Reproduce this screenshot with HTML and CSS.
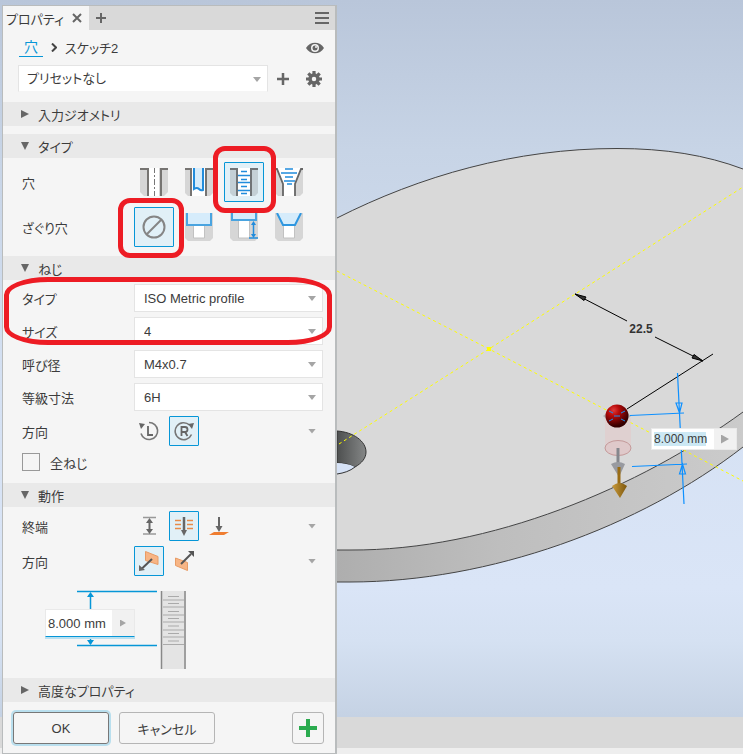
FILE: index.html
```html
<!DOCTYPE html>
<html lang="ja">
<head>
<meta charset="utf-8">
<meta name="viewport" content="width=device-width, initial-scale=1">
<title>プロパティ</title>
<link rel="stylesheet" href="styles.css">
</head>
<body>
<div class="app">
  <aside class="panel">
    <header class="tabs">
      <div class="tab">プロパティ
        <button class="icon-btn" type="button" aria-label="閉じる"><svg width="10" height="10" viewBox="0 0 10 10"><path d="M1 1l8 8M9 1l-8 8" stroke="#666" stroke-width="2"/></svg></button>
      </div>
      <button class="icon-btn tab-add" type="button" aria-label="タブを追加"><svg width="10" height="10" viewBox="0 0 10 10"><path d="M5 0v10M0 5h10" stroke="#666" stroke-width="2"/></svg></button>
      <button class="icon-btn menu" type="button" aria-label="メニュー"><svg width="14" height="12" viewBox="0 0 14 12"><path d="M0 1h14M0 6h14M0 11h14" stroke="#666" stroke-width="2"/></svg></button>
    </header>

    <nav class="crumbs">
      <a class="crumb-link" href="#hole">穴</a>
      <svg width="6" height="9" viewBox="0 0 6 9"><path d="M1 0.500l4 4-4 4" fill="none" stroke="#444" stroke-width="2"/></svg>
      <span>スケッチ2</span>
      <button class="icon-btn push" type="button" aria-label="表示"><svg width="18" height="12" viewBox="0 0 18 12"><path d="M0 6C4-1 14-1 18 6 14 13 4 13 0 6z" fill="#666"/><circle cx="9" cy="6" r="4" fill="#f5f5f5"/><circle cx="9" cy="6" r="2.500" fill="#666"/><circle cx="10" cy="5" r="1" fill="#f5f5f5"/></svg></button>
    </nav>

    <div class="preset">
      <span class="drop preset-drop"><select aria-label="プリセット"><option>プリセットなし</option></select></span>
      <button class="icon-btn" type="button" aria-label="プリセットを追加"><svg width="14" height="14" viewBox="0 0 14 14"><path d="M7 1v12M1 7h12" stroke="#666" stroke-width="2.500"/></svg></button>
      <button class="icon-btn" type="button" aria-label="設定"><svg width="16" height="16" viewBox="0 0 16 16"><g fill="none" stroke="#666"><circle cx="8" cy="8" r="4" stroke-width="3.500"/><path d="M8 0v3M8 13v3M0 8h3M13 8h3M2.300 2.300l2.200 2.200M11.500 11.500l2.200 2.200M2.300 13.700l2.200-2.200M11.500 4.500l2.200-2.200" stroke-width="3.200"/></g></svg></button>
    </div>

    <button class="section-head" type="button"><span class="tri tri-right"></span>入力ジオメトリ</button>

    <section class="section">
      <button class="section-head open" type="button"><span class="tri tri-down"></span>タイプ</button>
      <div class="section-body type-body">
        <div class="row">
          <span class="label">穴</span>
          <div class="tools large">
            <button class="tool" type="button" aria-label="単純穴"><svg width="28" height="28" viewBox="0 0 28 28"><path d="M0 0h9v28H4l-4-4zM19 0h9v24l-4 4h-5z" fill="#d6d6d6"/><path d="M9 0h10v28H9z" fill="#fff"/><path d="M0 1h8v27M28 1h-7v27" fill="none" stroke="#767472" stroke-width="2"/><path d="M14.500-1v30" stroke="#777" stroke-dasharray="6 2 2 2"/></svg></button>
            <button class="tool" type="button" aria-label="クリアランス穴"><svg width="28" height="28" viewBox="0 0 28 28"><path d="M0 0h6v28H3l-3-3zM20 0h8v25l-3 3h-5z" fill="#d6d6d6"/><path d="M6 0h14v28H6z" fill="#fff"/><path d="M0 1h6v27M28 1h-7v27" fill="none" stroke="#767472" stroke-width="2"/><path d="M9 0v21q3-2 5 0t4 1V0" fill="#d6ecfb" stroke="#218cdc" stroke-width="2"/></svg></button>
            <button class="tool selected ring-hole" type="button" aria-label="ねじ穴" aria-pressed="true"><svg width="28" height="28" viewBox="0 0 28 28"><path d="M0 0h7v28H3l-3-3zM21 0h7v25l-3 3h-4z" fill="#c4d0d6"/><path d="M7 0h14v28H7z" fill="#fff"/><path d="M0 1h7v27M28 1h-7v27" fill="none" stroke="#707477" stroke-width="2"/><path d="M11 3.500h6M8 7.500h12M11 11.500h6M8 14.500h12M11 18.500h6M8 22.500h12M11 25.500h6" stroke="#218cdc" stroke-width="1.300"/></svg></button>
            <button class="tool" type="button" aria-label="テーパねじ穴"><svg width="28" height="28" viewBox="0 0 28 28"><path d="M0 0h28v25l-3 3H3l-3-3z" fill="#d6d6d6"/><path d="M2 0h24l-6 16v12H8V16z" fill="#fff"/><path d="M0 1h2l6 15v12M28 1h-2l-6 15v12" fill="none" stroke="#666" stroke-width="1.800"/><path d="M10 1h8M6 5h16M10 9h8M9 13h11M12 16h5" stroke="#218cdc" stroke-width="1.400"/></svg></button>
          </div>
        </div>
        <div class="row">
          <span class="label">ざぐり穴</span>
          <div class="tools large">
            <button class="tool selected ring-seat" type="button" aria-label="なし" aria-pressed="true"><svg width="24" height="24" viewBox="0 0 24 24"><circle cx="12" cy="12" r="10.500" fill="none" stroke="#858585" stroke-width="2"/><path d="M5 19L19 5" stroke="#858585" stroke-width="2"/></svg></button>
            <button class="tool" type="button" aria-label="ざぐり"><svg width="28" height="28" viewBox="0 0 28 28"><path d="M0 0h28v25l-3 3H3l-3-3z" fill="#d6d6d6"/><path d="M8.500 12h11v13h-11z" fill="#fff" stroke="#c2c2c2"/><path d="M2 0v12h24V0" fill="#d6ecfb" stroke="#4aa4e0" stroke-width="2"/></svg></button>
            <button class="tool" type="button" aria-label="スポットフェイス"><svg width="28" height="28" viewBox="0 0 28 28"><path d="M0 0h28v25l-3 3H3l-3-3z" fill="#d6d6d6"/><path d="M8.500 7h11v18h-11z" fill="#fff" stroke="#c2c2c2"/><path d="M2 0v7h24V0" fill="#d6ecfb" stroke="#4aa4e0" stroke-width="2"/><path d="M23.500 11v12M19 25h9" stroke="#218cdc" stroke-width="1.500"/><path d="M23.500 8l2.500 4h-5zM23.500 25l2.500-4h-5z" fill="#218cdc"/></svg></button>
            <button class="tool" type="button" aria-label="皿穴"><svg width="28" height="28" viewBox="0 0 28 28"><path d="M0 0h28v25l-3 3H3l-3-3z" fill="#d6d6d6"/><path d="M8.500 12h11v13h-11z" fill="#fff" stroke="#c2c2c2"/><path d="M2 0l6 12h12l6-12" fill="#d6ecfb" stroke="#2f97e0" stroke-width="2"/></svg></button>
          </div>
        </div>
      </div>
    </section>

    <section class="section">
      <button class="section-head open" type="button"><span class="tri tri-down"></span>ねじ</button>
      <div class="section-body thread-body">
        <div class="ring-rows">
          <div class="row"><label class="label" for="t-type">タイプ</label><span class="drop"><select id="t-type"><option>ISO Metric profile</option></select></span></div>
          <div class="row"><label class="label" for="t-size">サイズ</label><span class="drop"><select id="t-size"><option>4</option></select></span></div>
        </div>
        <div class="row"><label class="label" for="t-name">呼び径</label><span class="drop"><select id="t-name"><option>M4x0.7</option></select></span></div>
        <div class="row"><label class="label" for="t-class">等級寸法</label><span class="drop"><select id="t-class"><option>6H</option></select></span></div>
        <div class="row">
          <span class="label">方向</span>
          <div class="tools">
            <button class="tool" type="button" aria-label="左"><svg width="20" height="20" viewBox="0 0 20 20"><path d="M10 1.500a8.500 8.500 0 1 1-8 11" fill="none" stroke="#777" stroke-width="1.600"/><path d="M0 2l6 1-4 5z" fill="#666"/><path d="M9 5v9h5" fill="none" stroke="#666" stroke-width="1.800"/></svg></button>
            <button class="tool selected" type="button" aria-label="右" aria-pressed="true"><svg width="20" height="20" viewBox="0 0 20 20"><path d="M17.500 13.500a8.500 8.500 0 1 1-2-9.500" fill="none" stroke="#777" stroke-width="1.600"/><path d="M20 2l-6 1 4 5z" fill="#666"/><path d="M7.500 15V6h3.500a2.500 2.500 0 0 1 0 5H8M11 11l2.500 4" fill="none" stroke="#666" stroke-width="1.800"/></svg></button>
            <button class="more" type="button" aria-label="その他"></button>
          </div>
        </div>
        <label class="check"><input type="checkbox">全ねじ</label>
      </div>
    </section>

    <section class="section">
      <button class="section-head open" type="button"><span class="tri tri-down"></span>動作</button>
      <div class="section-body action-body">
        <div class="row">
          <span class="label">終端</span>
          <div class="tools">
            <button class="tool" type="button" aria-label="距離"><svg width="20" height="20" viewBox="0 0 20 20"><path d="M4 1.500h13M4 18h13" stroke="#999" stroke-width="1.500"/><path d="M10.500 5v10" stroke="#666" stroke-width="2"/><path d="M10.500 2l3.500 5H7zM10.500 18l3.500-5H7z" fill="#666"/></svg></button>
            <button class="tool selected" type="button" aria-label="全貫通" aria-pressed="true"><svg width="20" height="20" viewBox="0 0 20 20"><path d="M1 4.500h6M13 4.500h6M1 8.500h6M13 8.500h6M1 12.500h6M13 12.500h6" stroke="#e88a48" stroke-width="1.600"/><path d="M10 1v14" stroke="#666" stroke-width="2.500"/><path d="M10 20l3-6H7z" fill="#666"/></svg></button>
            <button class="tool" type="button" aria-label="指定面"><svg width="20" height="20" viewBox="0 0 20 20"><path d="M5 16h15l-5 3H0z" fill="#ef7d30"/><path d="M10 1v10" stroke="#666" stroke-width="2"/><path d="M10 16l3.500-6h-7z" fill="#666"/></svg></button>
            <button class="more" type="button" aria-label="その他"></button>
          </div>
        </div>
        <div class="row">
          <span class="label">方向</span>
          <div class="tools">
            <button class="tool selected" type="button" aria-label="既定" aria-pressed="true"><svg width="20" height="20" viewBox="0 0 20 20"><path d="M6.500 0.500l12.500 5v8l-12.500-4z" fill="#f7b585" stroke="#e89c66"/><path d="M13 8L3 17.500" stroke="#555" stroke-width="2"/><path d="M0 20v-6l6 5z" fill="#666"/></svg></button>
            <button class="tool" type="button" aria-label="反転"><svg width="20" height="20" viewBox="0 0 20 20"><path d="M1.500 7l12 4.500v8l-12-5z" fill="#f7b585" stroke="#e89c66"/><path d="M7 13L17 3" stroke="#555" stroke-width="2"/><path d="M20 0v6l-6-6z" fill="#555"/></svg></button>
            <button class="more" type="button" aria-label="その他"></button>
          </div>
        </div>
        <div class="depth">
          <svg width="142" height="80" viewBox="0 0 142 80">
            <path d="M116 1h25v78h-25z" fill="#e4e4e4"/><path d="M116.500 1v78M140 1v78" stroke="#888" stroke-width="1.500"/>
            <path d="M118 10h21M118 17h21M118 25h21M118 32h21M118 40h21M118 47h21M118 54.500h21" stroke="#aaa"/><path d="M123 6.500h11M123 13.500h11M123 21.500h11M123 28.500h11M123 36h11M123 43.500h11M123 51h11" stroke="#aaa"/>
            <path d="M32 1.500h80M32 55.500h80" stroke="#0696d7" stroke-width="1.500"/><path d="M45.500 4v50" stroke="#0696d7" stroke-width="1.500"/><path d="M45.500 2l3.500 5h-7zM45.500 55l3.500-5h-7z" fill="#0696d7"/>
          </svg>
          <span class="value depth-value"><input type="text" value="8.000 mm" aria-label="深さ"><button type="button" aria-label="深さのオプション"></button></span>
        </div>
      </div>
    </section>

    <button class="section-head" type="button"><span class="tri tri-right"></span>高度なプロパティ</button>

    <footer class="actions">
      <button class="btn primary" type="button">OK</button>
      <button class="btn" type="button">キャンセル</button>
      <button class="btn square" type="button" aria-label="適用"><svg width="20" height="20" viewBox="0 0 20 20"><path d="M10 1v18M1 10h18" stroke="#2bab4f" stroke-width="4"/></svg></button>
    </footer>
  </aside>

  <main class="viewport">
    <svg class="scene" viewBox="337 0 406 717" preserveAspectRatio="xMinYMin slice">
      <defs>
        <linearGradient id="side" x1="0" x2="1"><stop offset="0" stop-color="#aeaeae"/><stop offset="0.400" stop-color="#bebebe"/><stop offset="1" stop-color="#cbcbcb"/></linearGradient>
        <linearGradient id="bore" x1="0" x2="1"><stop offset="0" stop-color="#4d4f4f"/><stop offset="1" stop-color="#858787"/></linearGradient>
        <radialGradient id="ball" cx="0.350" cy="0.250" r="0.700"><stop offset="0" stop-color="#df3b3b"/><stop offset="0.350" stop-color="#b80a0a"/><stop offset="1" stop-color="#350000"/></radialGradient>
        <linearGradient id="gold" x1="0" x2="1"><stop offset="0" stop-color="#c99a3c"/><stop offset="1" stop-color="#7d570c"/></linearGradient>
      </defs>
      <path d="M743 412C640 487 490 551 350 550L337 550V582H350C490 582 640 527 743 447z" fill="url(#side)"/>
      <path d="M337 218C420 176 515 148.500 617 148.500C665 148.500 706 155 743 169V412C640 487 490 551 350 550H337z" fill="#d9d9d9"/>
      <g fill="none" stroke="#444"><path d="M337 218C420 176 515 148.500 617 148.500C665 148.500 706 155 743 169"/><path d="M743 412C640 487 490 551 350 550H337"/><path d="M743 447C640 527 490 582 350 582H337"/></g>
      <path d="M337 431C353 432 366 441 366 452C366 458 362 463 355 467C349 464 343 463 337 463z" fill="url(#bore)" stroke="#333"/>
      <path d="M337 463C343 463 349 464 355 467C350 471 344 473 337 474z" fill="#d6e2f6"/><path d="M355 467C350 471 344 473 337 474" fill="none" stroke="#333"/>
      <g stroke="#ff0" stroke-dasharray="3 3" fill="none"><path d="M339 444L489 349L743 187M337 271L489 349L743 481"/></g>
      <path d="M487 347h4v4h-4z" fill="#ff0"/>
      <g stroke="#000" fill="none"><path d="M575 294L627 321M655 337L703 361M627 409L713 354"/></g>
      <path d="M575 294l11 3-2 3.500zM703 361l-11-3 2-3.500z" fill="#333" stroke="#000"/>
      <text class="dim" x="641" y="333" text-anchor="middle">22.5</text>
      <path d="M605 418h26v30c0 10-26 10-26 0z" fill="#e4c8c8" opacity="0.550"/><ellipse cx="618" cy="448" rx="13" ry="7.500" fill="#dfc9ca" stroke="#c49a9a"/>
      <path d="M618 448v21" stroke="#85878d" stroke-width="3"/><path d="M611 464q7-4 14 0l-6 13z" fill="#989aa0"/>
      <path d="M619 467v20" stroke="#9a6c14" stroke-width="3"/><path d="M612 486q8-6 15 0l-7 12z" fill="url(#gold)"/>
      <path d="M603 416l14-10 14 10-14 11z" fill="#888" opacity="0.500"/><circle cx="617" cy="416" r="11.500" fill="url(#ball)"/>
      <path d="M609 411l4 2M621 413l4-2M609 421l4-2M621 419l4 2M614 416h6" stroke="#1a90f0"/>
      <g stroke="#0d90ff" fill="none" stroke-width="1.200"><path d="M630 415.500L684 413M632 466.500L687 464M677.500 373L684 504M676 403h6l-2.500 10zM679.500 474h6l-3-10z"/></g>
    </svg>
    <span class="value pin"><input type="text" value="8.000 mm" aria-label="穴の深さ"><button type="button" aria-label="穴の深さのオプション"></button></span>
  </main>
  <div class="status"></div>
</div>
</body>
</html>
```

FILE: styles.css
```css
* {
  box-sizing: border-box;
}

body {
  margin: 0;
  color: #3c3c3c;
  font-family: "Liberation Sans", "Noto Sans CJK JP", sans-serif;
  font-size: 13px;
  font-feature-settings: "palt";
}

button,
input,
select {
  margin: 0;
  padding: 0;
  border: 0;
  color: inherit;
  font: inherit;
  font-feature-settings: inherit;
}

button {
  background: none;
}

svg {
  display: block;
}

.app {
  display: grid;
  grid-template-columns: auto 1fr;
  grid-template-rows: 1fr auto;
  min-height: 100vh;
  background: linear-gradient(#b9c6da, #c7d4e6 20%, #d5e1f3 52%, #dae5f7 78%, #d5e1f2 85%, #c5d2e4 95%);
}

/* Docked property panel */
.panel {
  z-index: 1;
  grid-row: 1 / -1;
  grid-column: 1;
  width: 335px;
  margin: 5px 0 0 2px;
  border: 1px solid #b9bcbd;
  border-right-width: 2px;
  background: #f5f5f5;
}

.icon-btn {
  display: grid;
  place-items: center;
}

.tabs {
  display: flex;
  align-items: center;
  height: 24px;
  background: #d9d9d9;
}

.tab {
  display: flex;
  align-items: center;
  gap: 8px;
  height: 100%;
  padding: 0 7px 0 3px;
  background: #f5f5f5;
}

.tab-add {
  margin-left: 7px;
}

.menu {
  margin: 0 6px 0 auto;
}

.crumbs {
  display: flex;
  align-items: center;
  gap: 8px;
  height: 35px;
  padding: 0 11px 0 16px;
}

.crumb-link {
  padding: 0 5px;
  border-bottom: 1px solid #0696d7;
  color: #0696d7;
  font-size: 14px;
  line-height: 18px;
  text-decoration: none;
}

.push {
  margin-left: auto;
}

.preset {
  display: flex;
  align-items: center;
  gap: 8px;
  margin-bottom: 10px;
  padding: 0 13px 0 15px;
}

.preset .icon-btn:last-child {
  margin-left: 8px;
}

.drop {
  position: relative;
  display: block;
}

.drop select {
  display: block;
  width: 100%;
  height: 28px;
  padding: 0 20px 0 9px;
  border: 1px solid #e4e4e4;
  border-radius: 0;
  background: #fff;
  appearance: none;
}

.preset-drop {
  flex: 1;
}

.preset-drop select {
  height: 27px;
  padding-left: 8px;
  border-bottom-color: #f5f5f5;
}

.drop::after,
.more::after {
  content: "";
  display: block;
  width: 8px;
  height: 5px;
  background: #a5a5a5;
  clip-path: polygon(0 0, 100% 0, 50% 100%);
}

.drop::after {
  position: absolute;
  top: 12px;
  right: 7px;
  pointer-events: none;
}

.section-head {
  display: flex;
  align-items: center;
  gap: 9px;
  width: 100%;
  height: 24px;
  padding: 0 18px;
  background: #e9e9e9;
  text-align: left;
}

.section-head + .section {
  margin-top: 8px;
}

.tri {
  width: 8px;
  height: 8px;
  background: #666;
}

.tri-right {
  clip-path: polygon(0 0, 100% 50%, 0 100%);
}

.tri-down {
  clip-path: polygon(0 0, 100% 0, 50% 100%);
}

.section-body,
.ring-rows {
  display: grid;
  gap: 5px;
}

.section-body {
  padding: 4px 12px 8px 19px;
}

.type-body {
  padding-bottom: 9px;
}

.thread-body {
  padding-bottom: 12px;
}

.row {
  display: grid;
  grid-template-columns: 112px 1fr;
  align-items: center;
}

.tools {
  display: flex;
  align-items: center;
  gap: 5px;
}

.tool {
  position: relative;
  display: grid;
  place-items: center;
  width: 30px;
  height: 30px;
  border: 1px solid transparent;
  border-radius: 1px;
}

.large .tool {
  width: 40px;
  height: 40px;
}

.tool.selected {
  border-color: #0696d7;
  background: #e1f0f7;
}

.more {
  margin: 0 7px 0 auto;
}

/* Red call-outs drawn over the controls */
.ring-hole::after,
.ring-seat::after,
.ring-rows::after {
  content: "";
  position: absolute;
  z-index: 2;
  border: 5px solid #ed1c24;
  border-radius: 12px;
  pointer-events: none;
}

.ring-hole::after {
  inset: -17px -13px -12px -12px;
}

.ring-seat::after {
  inset: -10px -11px -12px -17px;
}

.ring-rows {
  position: relative;
}

.ring-rows::after {
  inset: -7px -9px 0 -18px;
  border-radius: 44px / 18px;
}

.check {
  display: flex;
  align-items: center;
  gap: 10px;
  height: 18px;
  margin-top: 2px;
}

.check input {
  width: 18px;
  height: 18px;
  border: 1px solid #999;
  background: #f5f5f5;
  appearance: none;
}

.depth {
  display: grid;
  justify-content: start;
  margin: 9px 0 0 23px;
}

.depth > * {
  grid-area: 1 / 1;
}

.value {
  display: flex;
  background: #fff;
}

.value input {
  min-width: 0;
  flex: 1;
  padding-left: 2px;
  background: transparent;
}

.value button {
  display: grid;
  place-items: center;
  width: 22px;
  background: #f1f1f1;
}

.value button::after {
  content: "";
  width: 6px;
  height: 7px;
  background: #a5a5a5;
  clip-path: polygon(0 0, 100% 50%, 0 100%);
}

.depth-value {
  width: 90px;
  height: 28px;
  margin-top: 19px;
  border: 1px solid #e9e9e9;
  border-bottom: 1px solid #0696d7;
  box-shadow: 0 2px #b9e0f0;
}

.actions {
  display: flex;
  gap: 10px;
  padding: 10px 11px 8px 10px;
}

.btn {
  width: 96px;
  height: 32px;
  border: 1px solid #b5b5b5;
  border-radius: 3px;
}

.btn.primary {
  border-color: #777;
  box-shadow: 0 0 0 2px #b9dfee;
}

.btn.square {
  display: grid;
  place-items: center;
  width: 32px;
  margin-left: auto;
}

/* Model canvas */
.viewport {
  position: relative;
  grid-row: 1;
  grid-column: 2;
  overflow: hidden;
}

.scene {
  position: absolute;
  width: 100%;
  height: 100%;
}

.dim {
  fill: #333;
  font-size: 12px;
  font-weight: bold;
}

.pin {
  position: absolute;
  top: 428px;
  left: 314px;
  width: 86px;
  height: 22px;
  border: 1px solid #e9e9e9;
}

.pin input {
  background: linear-gradient(#cce8f4, #cce8f4) 2px center / 52px 14px no-repeat;
  font-size: 12px;
}

.pin button::after {
  width: 8px;
  height: 9px;
}

.status {
  grid-row: 2;
  grid-column: 1 / -1;
  height: 37px;
  border-bottom: 6px solid #eee;
  background: #d9d9d9;
}
```
